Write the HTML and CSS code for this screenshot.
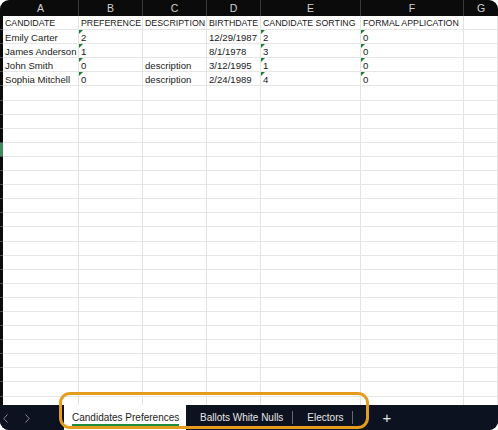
FILE: index.html
```html
<!DOCTYPE html>
<html lang="en">
<head>
    <meta charset="UTF-8">
    <meta name="viewport" content="width=device-width, initial-scale=1.0">
    <title>Candidates Preferences</title>
    <link rel="stylesheet" href="styles.css">
</head>
<body>
    <div class="window">
        <div class="col-head">
            <div class="corner"></div>
            <div>A</div>
            <div>B</div>
            <div>C</div>
            <div>D</div>
            <div>E</div>
            <div>F</div>
            <div>G</div>
        </div>

        <div class="sheet" id="sheet">
            <div class="row head">
                <div class="rh"></div>
                <div class="cell">CANDIDATE</div>
                <div class="cell">PREFERENCE</div>
                <div class="cell">DESCRIPTION</div>
                <div class="cell">BIRTHDATE</div>
                <div class="cell">CANDIDATE SORTING</div>
                <div class="cell">FORMAL APPLICATION</div>
                <div class="cell"></div>
            </div>
            <div class="row">
                <div class="rh"></div>
                <div class="cell">Emily Carter</div>
                <div class="cell flag">2</div>
                <div class="cell"></div>
                <div class="cell">12/29/1987</div>
                <div class="cell flag">2</div>
                <div class="cell flag">0</div>
                <div class="cell"></div>
            </div>
            <div class="row">
                <div class="rh"></div>
                <div class="cell">James Anderson</div>
                <div class="cell flag">1</div>
                <div class="cell"></div>
                <div class="cell">8/1/1978</div>
                <div class="cell flag">3</div>
                <div class="cell flag">0</div>
                <div class="cell"></div>
            </div>
            <div class="row">
                <div class="rh"></div>
                <div class="cell">John Smith</div>
                <div class="cell flag">0</div>
                <div class="cell">description</div>
                <div class="cell">3/12/1995</div>
                <div class="cell flag">1</div>
                <div class="cell flag">0</div>
                <div class="cell"></div>
            </div>
            <div class="row">
                <div class="rh"></div>
                <div class="cell">Sophia Mitchell</div>
                <div class="cell flag">0</div>
                <div class="cell">description</div>
                <div class="cell">2/24/1989</div>
                <div class="cell flag">4</div>
                <div class="cell flag">0</div>
                <div class="cell"></div>
            </div>
        </div>

        <div class="tabs">
            <div class="nav">
                <svg width="5" height="9" viewBox="0 0 5 9"><path d="M4.5 0.5 L0.8 4.5 L4.5 8.5" fill="none" stroke="#8a8a8a" stroke-width="1"/></svg>
                <svg width="5" height="9" viewBox="0 0 5 9"><path d="M0.5 0.5 L4.2 4.5 L0.5 8.5" fill="none" stroke="#8a8a8a" stroke-width="1"/></svg>
            </div>
            <div class="tab active"><span>Candidates Preferences</span></div>
            <div class="tab">Ballots White Nulls</div>
            <div class="sep"></div>
            <div class="tab">Electors</div>
            <div class="sep"></div>
            <div class="add">+</div>
        </div>

        <div class="highlight"></div>
    </div>

    <script>
        // prazdne riadky pod datami
        const sheet = document.getElementById('sheet');
        for (let r = 6; r <= 28; r++) {
            const row = document.createElement('div');
            row.className = 'row';
            const head = document.createElement('div');
            head.className = r === 10 ? 'rh current' : 'rh';
            row.appendChild(head);
            for (let c = 0; c < 7; c++) {
                const cell = document.createElement('div');
                cell.className = 'cell';
                row.appendChild(cell);
            }
            sheet.appendChild(row);
        }
    </script>
</body>
</html>
```

FILE: styles.css
```css
body {
    margin: 0;
    background: #ffffff;
    font-family: 'Liberation Sans', Arial, sans-serif;
}
.window {
    position: relative;
    width: 498px;
    height: 430px;
    background: #0b0b0b;
    border-radius: 9px;
    overflow: hidden;
    display: flex;
    flex-direction: column;
}
.col-head {
    display: grid;
    grid-template-columns: 3px 76px 64px 64px 54px 100px 103px 1fr;
    height: 16px;
    flex-shrink: 0;
    color: #d2d2d2;
    font-size: 10.5px;
    line-height: 17px;
    text-align: center;
}
.col-head div {
    border-right: 1px solid #3a3a3a;
}
.col-head .corner,
.col-head div:last-child {
    border-right: none;
}
.sheet {
    flex: 1;
    overflow: hidden;
    background: #ffffff;
}
.row {
    display: grid;
    grid-template-columns: 3px 76px 64px 64px 54px 100px 103px 1fr;
    height: 14.1px;
}
.rh {
    background: #0b0b0b;
    border-bottom: 1px solid #4a4a4a;
}
.rh.current {
    background: #3d8b5c;
}
.cell {
    position: relative;
    box-sizing: border-box;
    border-right: 1px solid #e3e3e3;
    border-bottom: 1px solid #e6e6e6;
    padding: 0 1px 0 2px;
    font-size: 9.6px;
    line-height: 15px;
    color: #1a1a1a;
    white-space: nowrap;
    overflow: hidden;
}
.head .cell {
    font-size: 8.8px;
}
.flag::before {
    content: '';
    position: absolute;
    top: 0;
    left: 0;
    border-top: 4px solid #1f7a35;
    border-right: 4px solid transparent;
}
.tabs {
    display: flex;
    align-items: center;
    height: 25px;
    flex-shrink: 0;
    background: #0d1221;
    color: #e6e6e6;
    font-size: 10px;
}
.nav {
    width: 64px;
    display: flex;
    align-items: center;
    gap: 17px;
    padding: 2px 0 0 3px;
    box-sizing: border-box;
}
.nav svg {
    display: block;
}
.tab {
    padding: 0 9px 0 14px;
}
.tab.active {
    align-self: stretch;
    width: 122px;
    box-sizing: border-box;
    padding: 0 0 0 8px;
    background: #ffffff;
    color: #1d1d1d;
    display: flex;
    align-items: center;
}
.tab.active span {
    border-bottom: 2px solid #1e8a3c;
    padding: 3px 0 1px;
}
.sep {
    width: 1px;
    height: 13px;
    background: #6a6a6a;
}
.add {
    margin-left: 29px;
    font-size: 15px;
    color: #e6e6e6;
}
.highlight {
    position: absolute;
    left: 59px;
    top: 392px;
    width: 310px;
    height: 37px;
    box-sizing: border-box;
    border: 3px solid #e59b1b;
    border-radius: 11px;
}
```
